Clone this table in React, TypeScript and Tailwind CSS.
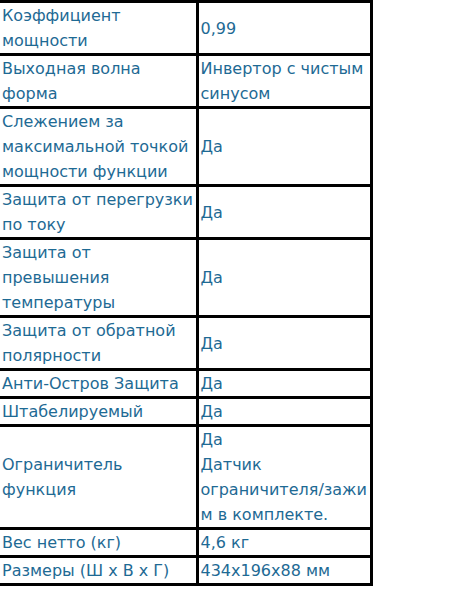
const rows: [string, React.ReactNode][] = [
  ["Коэффициент мощности", "0,99"],
  ["Выходная волна форма", "Инвертор с чистым синусом"],
  ["Слежением за максимальной точкой мощности функции", "Да"],
  ["Защита от перегрузки по току", "Да"],
  ["Защита от превышения температуры", "Да"],
  ["Защита от обратной полярности", "Да"],
  ["Анти-Остров Защита", "Да"],
  ["Штабелируемый", "Да"],
  [
    "Ограничитель функция",
    <>
      Да
      <br />
      Датчик
      <br />
      ограничителя/зажи
      <br />м в комплекте.
    </>,
  ],
  ["Вес нетто (кг)", "4,6 кг"],
  ["Размеры (Ш x В x Г)", "434x196x88 мм"],
]

export default function App() {
  return (
    <div className="min-h-[593px] w-[467px] overflow-hidden bg-white">
      <table
        className="border-collapse text-[16px] leading-[25px] text-[#1e6a94]"
        style={{ fontFamily: '"DejaVu Sans", Verdana, sans-serif' }}
      >
        <tbody>
          {rows.map(([label, value], i) => (
            <tr key={i}>
              <td className="w-[197px] border-y-[3px] border-r-[3px] border-black px-[2px] py-0 align-middle">
                {label}
              </td>
              <td className="w-[174px] border-[3px] border-black px-[2px] py-0 align-middle">{value}</td>
            </tr>
          ))}
        </tbody>
      </table>
    </div>
  )
}
